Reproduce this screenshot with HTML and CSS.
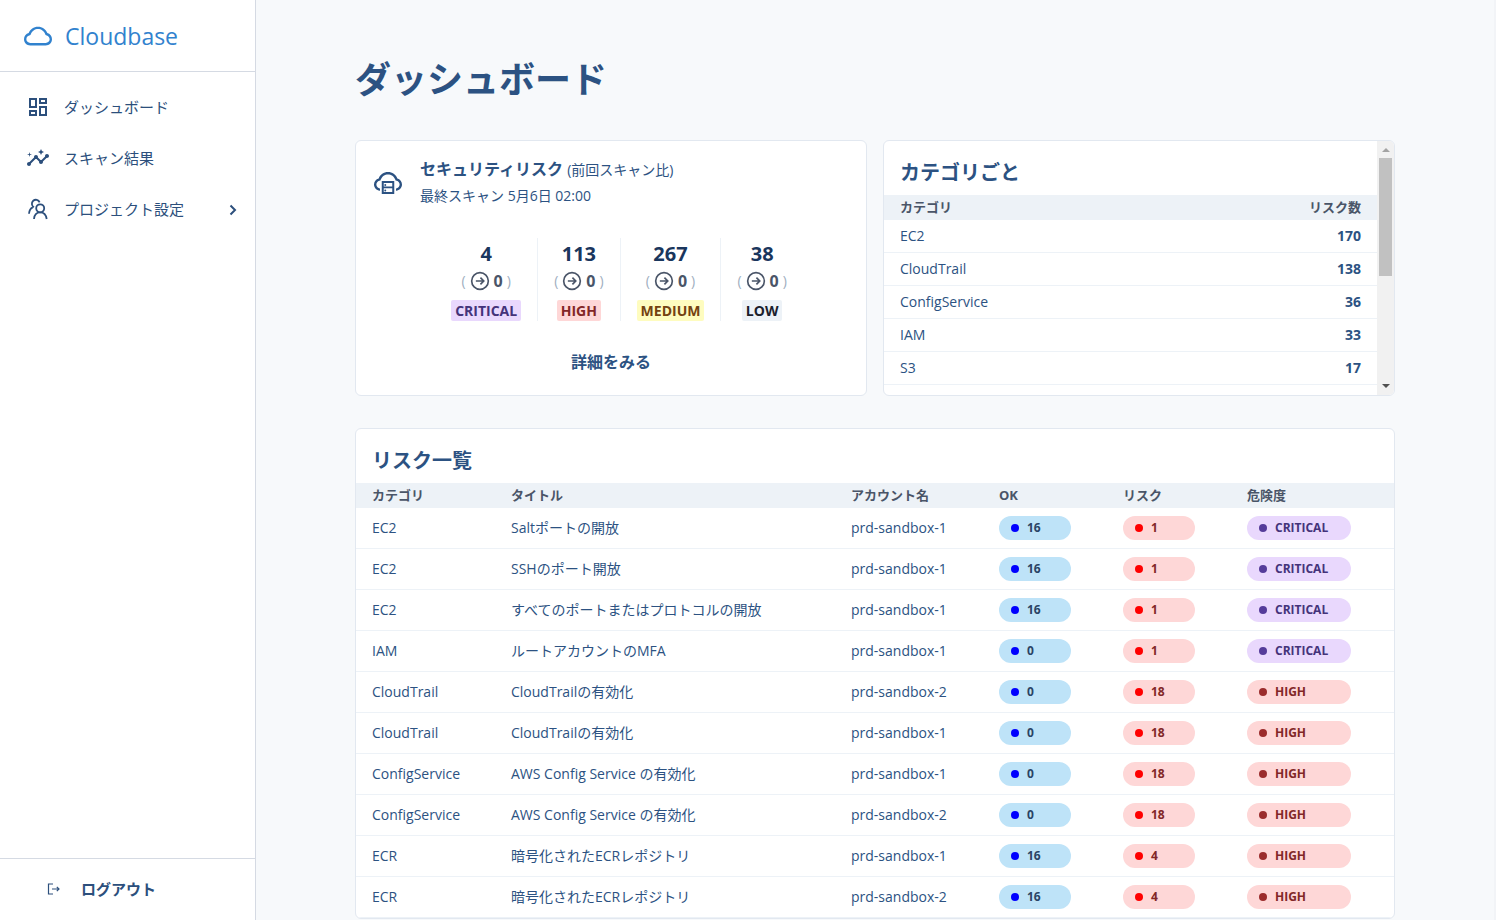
FILE: index.html
```html
<!DOCTYPE html>
<html lang="ja">
<head>
<meta charset="utf-8">
<meta name="viewport" content="width=device-width, initial-scale=1">
<title>Cloudbase</title>
<link rel="stylesheet" href="styles.css">
</head>
<body>
<svg class="sprite" aria-hidden="true">
  <symbol id="arrow" viewBox="0 0 24 24"><circle cx="12" cy="12" r="10" fill="none" stroke="currentColor" stroke-width="2"/><path d="M7 12h9M12.500 8l4 4-4 4" fill="none" stroke="currentColor" stroke-width="2"/></symbol>
</svg>
<div class="app">
  <aside class="sidebar">
    <a class="brand" href="#">
      <svg class="icon-lg" viewBox="0 0 1024 1024" fill="currentColor" aria-hidden="true"><path d="M811.4 418.7C765.6 297.9 648.9 212 512.2 212S258.8 297.8 213 418.6C127.3 441.1 64 519.1 64 612c0 110.500 89.500 200 199.900 200h496.200C870.500 812 960 722.500 960 612c0-92.700-63.100-170.700-148.600-193.300zm36.300 281a123.070 123.070 0 0 1-87.600 36.300H263.900c-33.100 0-64.200-12.900-87.600-36.300A123.300 123.300 0 0 1 140 612c0-28 9.100-54.300 26.200-76.300a125.700 125.700 0 0 1 66.100-43.700l37.900-9.900 13.900-36.600c8.600-22.800 20.600-44.100 35.700-63.400a245.600 245.600 0 0 1 52.400-49.900c41.100-28.900 89.500-44.200 140-44.200s98.900 15.300 140 44.200c19.900 14 37.500 30.800 52.400 49.900 15.100 19.300 27.100 40.700 35.700 63.400l13.800 36.500 37.800 10c54.300 14.500 92.100 63.800 92.100 120 0 33.100-12.900 64.300-36.300 87.700z"/></svg>
      <span>Cloudbase</span>
    </a>
    <nav class="nav">
      <a class="nav-item" href="#">
        <svg class="icon" viewBox="0 0 24 24" fill="currentColor" aria-hidden="true"><path d="M19 5v2h-4V5h4M9 5v6H5V5h4m10 8v6h-4v-6h4M9 17v2H5v-2h4M21 3h-8v6h8V3zM11 3H3v10h8V3zm10 8h-8v10h8V11zm-10 4H3v6h8v-6z"/></svg>
        <span>ダッシュボード</span>
      </a>
      <a class="nav-item" href="#">
        <svg class="icon" viewBox="0 0 24 24" fill="currentColor" aria-hidden="true"><path d="M21 8c-1.450 0-2.260 1.440-1.930 2.510l-3.550 3.560c-.3-.09-.74-.09-1.040 0l-2.550-2.550C12.270 10.450 11.460 9 10 9c-1.450 0-2.270 1.440-1.930 2.520l-4.560 4.550C2.440 15.740 1 16.550 1 18c0 1.100.9 2 2 2 1.450 0 2.260-1.440 1.930-2.510l4.550-4.560c.3.09.74.09 1.040 0l2.550 2.550C12.730 16.550 13.540 18 15 18c1.450 0 2.270-1.440 1.930-2.520l3.560-3.550C21.560 12.260 23 11.450 23 10c0-1.100-.9-2-2-2z"/><path d="M15 9l.94-2.070L18 6l-2.060-.93L15 3l-.92 2.070L12 6l2.080.93zM3.500 11L4 9l2-.5L4 8l-.5-2L3 8l-2 .5L3 9z"/></svg>
        <span>スキャン結果</span>
      </a>
      <a class="nav-item" href="#">
        <svg class="icon" viewBox="0 0 24 24" fill="none" stroke="currentColor" stroke-width="1.800" aria-hidden="true"><circle cx="14.200" cy="11.300" r="4"/><path d="M8 22c.3-4 2.700-6.700 6.200-6.700s5.900 2.700 6.500 6.700M13.600 5.300a4 4 0 1 0-5.600 5M6.800 10.300C4.500 11.300 3.200 13.500 3 16.800"/></svg>
        <span>プロジェクト設定</span>
        <svg class="chevron" viewBox="0 0 16 16" fill="none" stroke="currentColor" stroke-width="2" aria-hidden="true"><path d="M5.500 4.500L10 9l-4.500 4.500"/></svg>
      </a>
    </nav>
    <button class="logout" type="button">
      <svg class="icon-sm" viewBox="0 0 16 16" fill="none" stroke="currentColor" stroke-width="1.200" aria-hidden="true"><path d="M7 3H2.500v10H7M6 8h7M10.800 5.800L13 8l-2.200 2.200"/></svg>
      <span>ログアウト</span>
    </button>
  </aside>
  <main class="main">
    <div class="content">
      <h1 class="page-title">ダッシュボード</h1>
      <div class="summary">
        <section class="card risk">
          <header class="risk-head">
            <svg class="icon-lg" viewBox="0 0 1024 1024" fill="currentColor" aria-hidden="true"><path d="M704 446H320c-4.400 0-8 3.600-8 8v402c0 4.400 3.600 8 8 8h384c4.400 0 8-3.600 8-8V454c0-4.400-3.600-8-8-8zm-328 64h272v117H376V510zm272 290H376V683h272v117z"/><circle cx="424" cy="748" r="32"/><circle cx="424" cy="572" r="32"/><path d="M811.400 368.900C765.600 248 648.900 162 512.200 162S258.800 247.900 213 368.800C126.900 391.500 63.500 470.200 64 563.600 64.600 668 145.600 752.900 247.600 762c4.700.4 8.700-3.300 8.700-8v-60.400c0-4-3-7.400-7-7.900-27-3.400-52.500-15.200-72.100-34.500-24-23.500-37.200-55.100-37.200-88.600 0-28 9.100-54.400 26.200-76.400 16.700-21.400 40.200-36.900 66.100-43.700l37.900-10 13.900-36.700c8.600-22.800 20.600-44.200 35.700-63.500 14.900-19.200 32.600-36 52.400-50 41.100-28.900 89.500-44.200 140-44.200s98.900 15.300 140 44.300c19.900 14 37.500 30.800 52.400 50 15.100 19.300 27.100 40.700 35.700 63.500l13.800 36.600 37.800 10c54.200 14.400 92.100 63.700 92.100 120 0 33.600-13.200 65.100-37.200 88.600-19.500 19.200-44.900 31.100-71.900 34.500-4 .5-6.900 3.900-6.900 7.900V754c0 4.700 4.100 8.400 8.800 8 101.700-9.200 182.500-94 183.200-198.200.6-93.400-62.700-172.100-148.600-194.900z"/></svg>
            <div>
              <h2 class="risk-title">セキュリティリスク <small>(前回スキャン比)</small></h2>
              <p class="risk-date">最終スキャン 5月6日 02:00</p>
            </div>
          </header>
          <div class="stats">
            <div class="stat"><b class="count">4</b><span class="delta">( <svg class="icon-md" aria-hidden="true"><use href="#arrow"/></svg><b>0</b> )</span><span class="badge critical">CRITICAL</span></div>
            <div class="stat"><b class="count">113</b><span class="delta">( <svg class="icon-md" aria-hidden="true"><use href="#arrow"/></svg><b>0</b> )</span><span class="badge high">HIGH</span></div>
            <div class="stat"><b class="count">267</b><span class="delta">( <svg class="icon-md" aria-hidden="true"><use href="#arrow"/></svg><b>0</b> )</span><span class="badge medium">MEDIUM</span></div>
            <div class="stat"><b class="count">38</b><span class="delta">( <svg class="icon-md" aria-hidden="true"><use href="#arrow"/></svg><b>0</b> )</span><span class="badge low">LOW</span></div>
          </div>
          <a class="more" href="#">詳細をみる</a>
        </section>
        <section class="card by-category">
          <div class="scroll-body">
            <h2 class="card-title">カテゴリごと</h2>
            <table class="table compact">
              <thead><tr><th>カテゴリ</th><th class="num">リスク数</th></tr></thead>
              <tbody>
                <tr><td>EC2</td><td class="num">170</td></tr>
                <tr><td>CloudTrail</td><td class="num">138</td></tr>
                <tr><td>ConfigService</td><td class="num">36</td></tr>
                <tr><td>IAM</td><td class="num">33</td></tr>
                <tr><td>S3</td><td class="num">17</td></tr>
              </tbody>
            </table>
          </div>
          <div class="scrollbar" aria-hidden="true"><i class="up"></i><i class="thumb"></i><i class="down"></i></div>
        </section>
      </div>
      <section class="card">
        <h2 class="card-title">リスク一覧</h2>
        <table class="table risks">
          <colgroup><col class="c-cat"><col><col class="c-account"><col class="c-count"><col class="c-count"><col class="c-level"></colgroup>
          <thead><tr><th>カテゴリ</th><th>タイトル</th><th>アカウント名</th><th>OK</th><th>リスク</th><th>危険度</th></tr></thead>
          <tbody>
            <tr><td>EC2</td><td>Saltポートの開放</td><td>prd-sandbox-1</td><td><span class="pill ok">16</span></td><td><span class="pill ng">1</span></td><td><span class="pill level critical">CRITICAL</span></td></tr>
            <tr><td>EC2</td><td>SSHのポート開放</td><td>prd-sandbox-1</td><td><span class="pill ok">16</span></td><td><span class="pill ng">1</span></td><td><span class="pill level critical">CRITICAL</span></td></tr>
            <tr><td>EC2</td><td>すべてのポートまたはプロトコルの開放</td><td>prd-sandbox-1</td><td><span class="pill ok">16</span></td><td><span class="pill ng">1</span></td><td><span class="pill level critical">CRITICAL</span></td></tr>
            <tr><td>IAM</td><td>ルートアカウントのMFA</td><td>prd-sandbox-1</td><td><span class="pill ok">0</span></td><td><span class="pill ng">1</span></td><td><span class="pill level critical">CRITICAL</span></td></tr>
            <tr><td>CloudTrail</td><td>CloudTrailの有効化</td><td>prd-sandbox-2</td><td><span class="pill ok">0</span></td><td><span class="pill ng">18</span></td><td><span class="pill level high">HIGH</span></td></tr>
            <tr><td>CloudTrail</td><td>CloudTrailの有効化</td><td>prd-sandbox-1</td><td><span class="pill ok">0</span></td><td><span class="pill ng">18</span></td><td><span class="pill level high">HIGH</span></td></tr>
            <tr><td>ConfigService</td><td>AWS Config Service の有効化</td><td>prd-sandbox-1</td><td><span class="pill ok">0</span></td><td><span class="pill ng">18</span></td><td><span class="pill level high">HIGH</span></td></tr>
            <tr><td>ConfigService</td><td>AWS Config Service の有効化</td><td>prd-sandbox-2</td><td><span class="pill ok">0</span></td><td><span class="pill ng">18</span></td><td><span class="pill level high">HIGH</span></td></tr>
            <tr><td>ECR</td><td>暗号化されたECRレポジトリ</td><td>prd-sandbox-1</td><td><span class="pill ok">16</span></td><td><span class="pill ng">4</span></td><td><span class="pill level high">HIGH</span></td></tr>
            <tr><td>ECR</td><td>暗号化されたECRレポジトリ</td><td>prd-sandbox-2</td><td><span class="pill ok">16</span></td><td><span class="pill ng">4</span></td><td><span class="pill level high">HIGH</span></td></tr>
          </tbody>
        </table>
      </section>
    </div>
  </main>
</div>
</body>
</html>
```
FILE: styles.css
```css
* { box-sizing: border-box; }
body {
  margin: 0;
  font-family: "Open Sans", "Noto Sans CJK JP", sans-serif;
  font-size: 14px;
  line-height: 20px;
  color: #2c5282;
  background: #f7f9fb;
}
h1, h2, p { margin: 0; }
a { color: inherit; text-decoration: none; }
svg { flex: none; display: block; }
.sprite { display: none; }
.icon { width: 24px; height: 24px; }
.icon-lg { width: 32px; height: 32px; }
.icon-md { width: 20px; height: 20px; }
.icon-sm { width: 16px; height: 16px; }

.app { display: flex; height: 100vh; overflow: hidden; }

.sidebar {
  flex: none;
  display: flex;
  flex-direction: column;
  width: 256px;
  background: #fff;
  border-right: 1px solid #d5dae3;
}
.brand {
  display: flex;
  align-items: center;
  gap: 11px;
  height: 72px;
  padding-left: 22px;
  border-bottom: 1px solid #d5dae3;
  color: #3182ce;
  font-size: 23px;
  line-height: 32px;
}
.nav { flex: 1; padding-top: 9px; }
.nav-item {
  display: flex;
  align-items: center;
  gap: 14px;
  height: 51px;
  padding: 0 14px 0 26px;
  font-size: 15px;
  color: #2c4f7c;
}
.chevron { width: 16px; height: 16px; margin-left: auto; }
.logout {
  display: flex;
  align-items: center;
  gap: 19px;
  height: 62px;
  padding: 0 0 2px 46px;
  border: 0;
  border-top: 1px solid #d5dae3;
  background: none;
  color: #2c4f7c;
  font: inherit;
  font-size: 15px;
  font-weight: 700;
}

.main { flex: 1; overflow: hidden; padding: 0 32px; border-right: 2px solid #f2f4f7; }
.content { max-width: 1040px; margin: 0 auto; padding: 56px 0 32px; }
.page-title { margin-bottom: 36px; font-size: 36px; line-height: 48px; }

.card {
  background: #fff;
  border: 1px solid #e2e8f0;
  border-radius: 6px;
  overflow: hidden;
}
.card-title { padding: 20px 16px 10px; font-size: 20px; line-height: 24px; }
.summary {
  display: grid;
  grid-template-columns: 1fr 1fr;
  grid-auto-rows: 256px;
  gap: 16px;
  margin-bottom: 32px;
}

.risk { display: flex; flex-direction: column; align-items: center; }
.risk-head {
  display: flex;
  align-self: stretch;
  align-items: center;
  gap: 16px;
  padding: 15px 16px 0;
}
.risk-title { font-size: 16px; line-height: 26px; }
.risk-title small { font-size: 14px; font-weight: 400; }
.risk-date { line-height: 26px; }
.stats { display: flex; margin-top: 29px; }
.stat {
  display: flex;
  flex-direction: column;
  align-items: center;
  padding: 0 16px;
  border-right: 1px solid #edf2f7;
}
.stat:last-child { padding-right: 0; border-right: 0; }
.count { font-size: 20px; line-height: 32px; color: #1a365d; }
.delta {
  display: flex;
  align-items: center;
  gap: 4px;
  height: 22px;
  margin-bottom: 8px;
  color: #a0aec0;
}
.delta svg, .delta b { color: #4a5568; }
.delta b { font-size: 16px; }
.badge { padding: 0 4px; border-radius: 2px; font-weight: 700; line-height: 21px; }
.critical { background: #e9d8fd; color: #44337a; }
.high { background: #fed7d7; color: #822727; }
.medium { background: #fefcbf; color: #744210; }
.low { background: #edf2f7; color: #1a202c; }
.more { margin-top: 29px; font-size: 16px; font-weight: 700; line-height: 24px; }

.by-category { display: flex; }
.scroll-body { flex: 1; overflow: hidden; }
.scrollbar {
  display: flex;
  flex-direction: column;
  align-items: center;
  width: 17px;
  padding: 7px 0;
  background: #f1f1f1;
}
.up, .down { border: 4px solid transparent; }
.up { border-top: 0; border-bottom-color: #a3a3a3; }
.down { border-bottom: 0; border-top-color: #505050; margin-top: auto; }
.thumb { width: 13px; height: 118px; margin-top: 6px; background: #c1c1c1; }

.table { width: 100%; border-collapse: separate; border-spacing: 0; }
.table th {
  height: 25px;
  padding: 0 16px 1px;
  background: #edf2f7;
  color: #4a5568;
  font-size: 13px;
  line-height: 20px;
  text-align: left;
}
.table td { height: 41px; padding: 0 0 0 16px; border-bottom: 1px solid #edf2f7; }
.table .num { padding-right: 16px; text-align: right; }
.table td.num { font-weight: 700; }
.compact td { height: 33px; }
.risks { table-layout: fixed; }
.c-cat { width: 139px; }
.c-account { width: 148px; }
.c-count { width: 124px; }
.c-level { width: 163px; }

.pill {
  display: flex;
  align-items: center;
  gap: 8px;
  width: 72px;
  height: 24px;
  padding-left: 12px;
  border-radius: 12px;
  font-size: 12px;
  font-weight: 700;
}
.pill::before { content: ""; width: 8px; height: 8px; border-radius: 50%; background: #00f; }
.ok { background: #bee3f8; color: #2a4365; }
.ng { background: #fed7d7; color: #822727; }
.ng::before { background: #f00; }
.level { width: 104px; }
.level.critical::before { background: #553c9a; }
.level.high::before { background: #9b2c2c; }
```
